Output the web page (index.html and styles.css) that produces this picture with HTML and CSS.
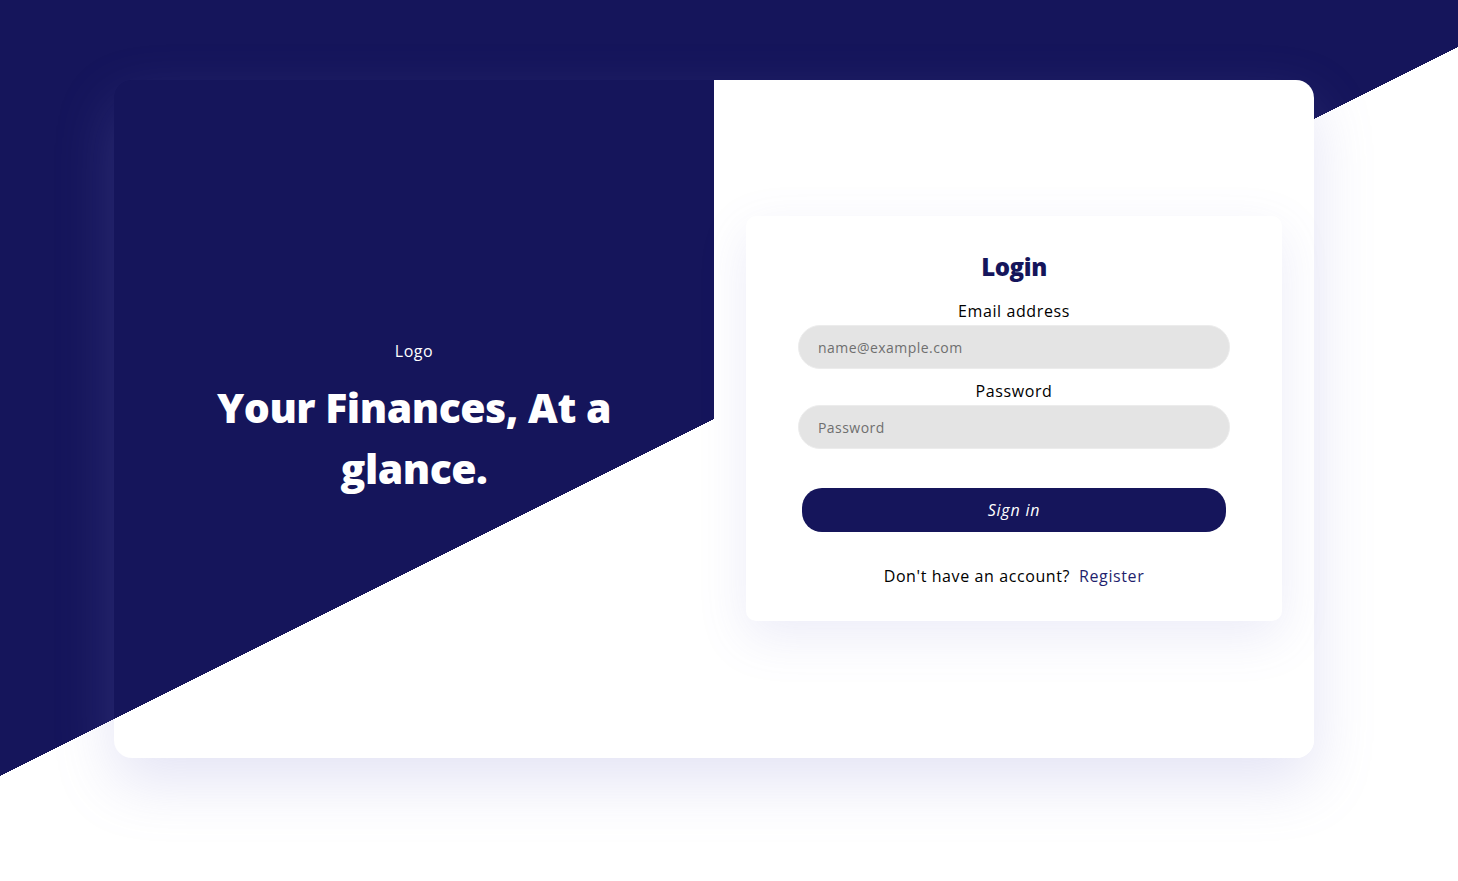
FILE: index.html
```html
<!DOCTYPE html>
<html lang="en">
<head>
<meta charset="utf-8">
<title>Login</title>
<link rel="stylesheet" href="styles.css">
</head>
<body>
<main class="page">
  <section class="card">
    <div class="brand">
      <div class="logo">Logo</div>
      <h1 class="tagline">Your Finances, At a glance.</h1>
    </div>
    <div class="panel">
      <form class="login-box">
        <h2 class="login-title">Login</h2>
        <label class="field-label" for="email">Email address</label>
        <input class="field" id="email" type="email" placeholder="name@example.com">
        <label class="field-label second" for="password">Password</label>
        <input class="field" id="password" type="password" placeholder="Password">
        <button class="btn" type="button">Sign in</button>
        <p class="register">Don't have an account?<a class="register-link" href="#">Register</a></p>
      </form>
    </div>
  </section>
</main>
</body>
</html>
```
FILE: styles.css
```css
* { box-sizing: border-box; }

html, body {
  margin: 0;
  height: 100%;
}

body {
  font-family: "Open Sans", "Noto Sans", sans-serif;
  background: linear-gradient(153.43deg, #15155b 0 694px, #ffffff 694px);
  color: #000;
  overflow: hidden;
}

.page {
  padding: 80px 0 0 114px;
}

.card {
  width: 1200px;
  height: 678px;
  display: flex;
  border-radius: 18px;
  box-shadow: 0 24px 60px rgba(130, 130, 210, 0.22);
}

.brand {
  flex: 1;
  display: flex;
  flex-direction: column;
  align-items: center;
  justify-content: center;
  color: #fff;
}

.logo {
  font-size: 16px;
  line-height: 24px;
  margin-bottom: 14px;
  letter-spacing: 0.5px;
}

.tagline {
  margin: 0;
  width: 420px;
  text-align: center;
  font-size: 41px;
  font-weight: 800;
  line-height: 61px;
  letter-spacing: -0.5px;
}

.panel {
  flex: 1;
  background: #fff;
  border-radius: 0 18px 18px 0;
  display: flex;
  align-items: center;
  justify-content: center;
  padding-bottom: 1px;
}

.login-box {
  width: 536px;
  background: #fff;
  border-radius: 10px;
  padding: 36px 52px 33px;
  display: flex;
  flex-direction: column;
  align-items: stretch;
  box-shadow: 0 16px 50px rgba(110, 110, 200, 0.13);
}

.login-title {
  margin: 0 0 18px;
  text-align: center;
  font-size: 24px;
  line-height: 29px;
  font-weight: 800;
  color: #15155b;
  letter-spacing: -0.4px;
}

.field-label {
  text-align: center;
  font-size: 16px;
  line-height: 24px;
  margin-bottom: 2px;
  letter-spacing: 0.6px;
}

.field-label.second {
  margin-top: 10px;
}

.field {
  height: 44px;
  border: 1px solid #ececec;
  border-radius: 22px;
  background: #e4e4e4;
  padding: 0 19px;
  font-family: inherit;
  font-size: 14px;
  letter-spacing: 0.45px;
  color: #333;
  outline: none;
}

.field::placeholder {
  color: #6f6f6f;
}

.btn {
  margin: 39px 4px 0;
  height: 44px;
  border: 0;
  border-radius: 20px;
  background: #15155b;
  color: #fff;
  font-family: inherit;
  font-size: 16px;
  font-style: italic;
  letter-spacing: 0.8px;
}

.register {
  margin: 32px 0 0;
  text-align: center;
  font-size: 16px;
  line-height: 24px;
  letter-spacing: 0.6px;
}

.register-link {
  margin-left: 9px;
  color: #1f1f6e;
  text-decoration: none;
}
```
